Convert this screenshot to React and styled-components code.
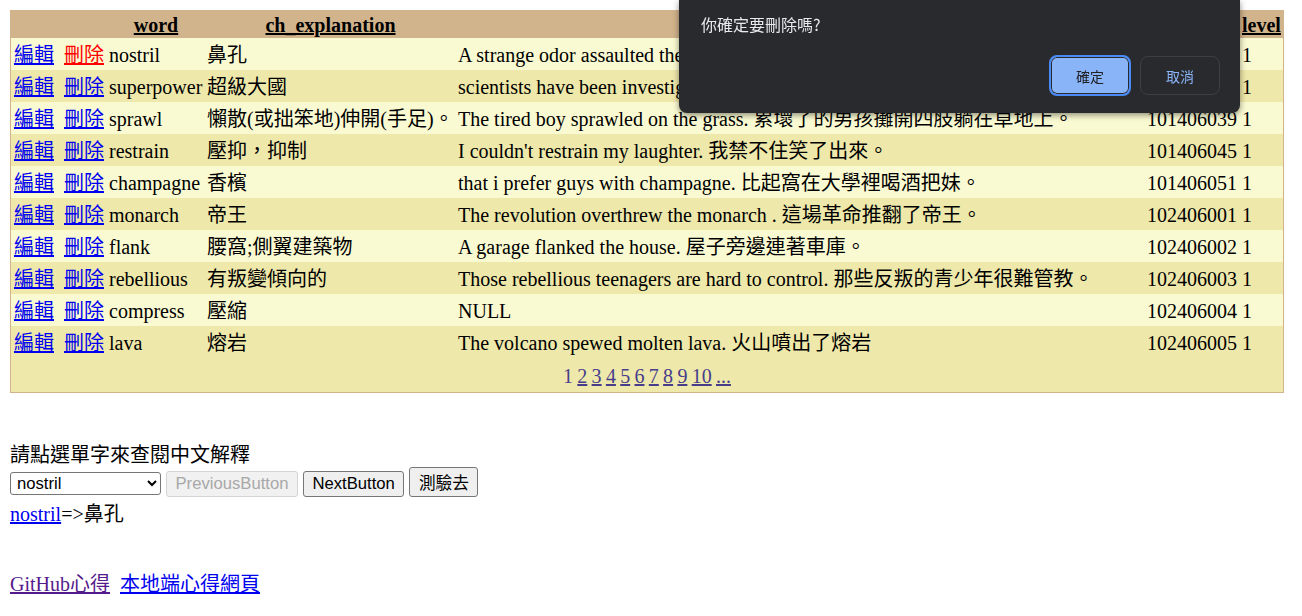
import styled, { createGlobalStyle } from "styled-components";

const GlobalStyle = createGlobalStyle`
	body {
		margin: 10px;
		background: #fff;
		color: #000;
		font-family: "Liberation Serif", "Noto Sans CJK TC", serif;
		font-size: 20px;
	}
`;

const words = [
	{ word: "nostril", ch: "鼻孔", sentence: "A strange odor assaulted the nostrils. 一股怪味撲鼻而來。", id: "101406026" },
	{ word: "superpower", ch: "超級大國", sentence: "scientists have been investigating the superpower. 科學家一直在研究超能力。", id: "101406033" },
	{ word: "sprawl", ch: "懶散(或拙笨地)伸開(手足)。", sentence: "The tired boy sprawled on the grass. 累壞了的男孩攤開四肢躺在草地上。", id: "101406039" },
	{ word: "restrain", ch: "壓抑，抑制", sentence: "I couldn't restrain my laughter. 我禁不住笑了出來。", id: "101406045" },
	{ word: "champagne", ch: "香檳", sentence: "that i prefer guys with champagne. 比起窩在大學裡喝酒把妹。", id: "101406051" },
	{ word: "monarch", ch: "帝王", sentence: "The revolution overthrew the monarch . 這場革命推翻了帝王。", id: "102406001" },
	{ word: "flank", ch: "腰窩;側翼建築物", sentence: "A garage flanked the house. 屋子旁邊連著車庫。", id: "102406002" },
	{ word: "rebellious", ch: "有叛變傾向的", sentence: "Those rebellious teenagers are hard to control. 那些反叛的青少年很難管教。", id: "102406003" },
	{ word: "compress", ch: "壓縮", sentence: "NULL", id: "102406004" },
	{ word: "lava", ch: "熔岩", sentence: "The volcano spewed molten lava. 火山噴出了熔岩", id: "102406005" },
];

const columns = [
	{ key: "actions", label: "", width: 96 },
	{ key: "word", label: "word", width: 98 },
	{ key: "ch", label: "ch_explanation", width: 251 },
	{ key: "sentence", label: "en_sentence", width: 689 },
	{ key: "id", label: "id", width: 95 },
	{ key: "level", label: "level", width: 43 },
];

const pages = ["1", "2", "3", "4", "5", "6", "7", "8", "9", "10", "..."];

const App = () => {
	return (
		<>
			<GlobalStyle />
			<Grid>
				<colgroup>
					{columns.map((c) => (
						<Col key={c.key} $w={c.width} />
					))}
				</colgroup>
				<thead>
					<HeadRow>
						{columns.map((c) => (
							<HeadCell key={c.key}>
								{c.label && <SortLink href="#">{c.label}</SortLink>}
							</HeadCell>
						))}
					</HeadRow>
				</thead>
				<tbody>
					{words.map((w, i) => (
						<Row key={w.word} $alt={i % 2 === 1}>
							<ActionCell>
								<CmdLink href="#">編輯</CmdLink>
								<CmdLink href="#" $pressed={i === 0}>刪除</CmdLink>
							</ActionCell>
							<Cell>{w.word}</Cell>
							<Cell>{w.ch}</Cell>
							<Cell>{w.sentence}</Cell>
							<Cell>{w.id}</Cell>
							<Cell>1</Cell>
						</Row>
					))}
					<PagerRow>
						<PagerCell colSpan={6}>
							<Pager>
								{pages.map((p) =>
									p === "1" ? (
										<span key={p}>{p}</span>
									) : (
										<PageLink key={p} href="#">{p}</PageLink>
									)
								)}
							</Pager>
						</PagerCell>
					</PagerRow>
				</tbody>
			</Grid>

			<Hint>請點選單字來查閱中文解釋</Hint>
			<Controls>
				<WordSelect defaultValue="nostril">
					{words.map((w) => (
						<option key={w.word} value={w.word}>{w.word}</option>
					))}
				</WordSelect>
				<PlainButton disabled>PreviousButton</PlainButton>
				<PlainButton>NextButton</PlainButton>
				<PlainButton>測驗去</PlainButton>
			</Controls>
			<Answer>
				<TextLink href="#">nostril</TextLink>=&gt;鼻孔
			</Answer>
			<Footer>
				<TextLink href="#" $visited>GitHub心得</TextLink>
				<TextLink href="#">本地端心得網頁</TextLink>
			</Footer>

			<ConfirmBox role="dialog">
				<ConfirmText>你確定要刪除嗎?</ConfirmText>
				<ConfirmActions>
					<OkButton>確定</OkButton>
					<CancelButton>取消</CancelButton>
				</ConfirmActions>
			</ConfirmBox>
		</>
	);
};

export default App;

// Styled components
const Grid = styled.table`
	width: 1274px;
	table-layout: fixed;
	border-collapse: separate;
	border-spacing: 0;
	border: 1px solid #d2b48c;
	background: #fafad2;
`;

const Col = styled.col`
	width: ${({ $w }) => $w}px;
`;

const HeadRow = styled.tr`
	background: #d2b48c;
`;

const HeadCell = styled.th`
	padding: 3px 2px 1px;
	line-height: 23px;
	font-weight: bold;
	text-align: center;
	white-space: nowrap;
	overflow: hidden;
`;

const SortLink = styled.a`
	color: #000;
	text-decoration: underline;
`;

const Row = styled.tr`
	background: ${({ $alt }) => ($alt ? "#eee8aa" : "#fafad2")};
`;

const Cell = styled.td`
	padding: 3px 2px 1px;
	line-height: 28px;
	white-space: nowrap;
	overflow: hidden;
	vertical-align: middle;
`;

const ActionCell = styled(Cell)`
	padding-left: 3px;

	a + a {
		margin-left: 10px;
	}
`;

const CmdLink = styled.a`
	color: ${({ $pressed }) => ($pressed ? "#ff0000" : "#0000ee")};
	text-decoration: underline;
`;

const PagerRow = styled.tr`
	background: #eee8aa;
`;

const PagerCell = styled.td`
	padding: 3px 2px 1px;
	line-height: 30px;
	color: #483d8b;
`;

const Pager = styled.div`
	display: flex;
	justify-content: center;
	gap: 4.3px;
`;

const PageLink = styled.a`
	color: #483d8b;
	text-decoration: underline;
`;

const Hint = styled.div`
	margin-top: 51px;
	line-height: 23px;
`;

const Controls = styled.div`
	display: flex;
	align-items: baseline;
	gap: 5px;
`;

const WordSelect = styled.select`
	width: 151px;
	height: 23px;
	font-family: "Liberation Sans", "Noto Sans CJK TC", sans-serif;
	font-size: 16.67px;
	color: #000;
	border: 1px solid #767676;
	border-radius: 3px;
	background: #fff;
	padding: 0 2px;
`;

const PlainButton = styled.button`
	font-family: "Liberation Sans", "Noto Sans CJK TC", sans-serif;
	font-size: 16.67px;
	padding: 2px 8.5px;
	color: #000;
	background: #efefef;
	border: 1px solid #767676;
	border-radius: 3px;

	&:disabled {
		color: #a8a8a8;
		background: #f1f1f1;
		border-color: #d4d4d4;
	}
`;

const Answer = styled.div`
	margin-top: 4px;
	line-height: 26px;
`;

const Footer = styled.div`
	margin-top: 44px;
	line-height: 26px;
	display: flex;
	gap: 10px;
`;

const TextLink = styled.a`
	color: ${({ $visited }) => ($visited ? "#551a8b" : "#0000ee")};
	text-decoration: underline;
`;

const ConfirmBox = styled.div`
	position: fixed;
	top: 0;
	left: 679px;
	width: 561px;
	height: 113px;
	box-sizing: border-box;
	padding: 14px 20px 0 22px;
	background: #292a2d;
	border-radius: 0 0 8px 8px;
	box-shadow: 0 2px 6px rgba(0, 0, 0, 0.45);
	font-family: "Noto Sans CJK TC", "Liberation Sans", sans-serif;
	display: flex;
	flex-direction: column;
`;

const ConfirmText = styled.div`
	color: #e8eaed;
	font-size: 16px;
	line-height: 20px;
`;

const ConfirmActions = styled.div`
	margin-top: 21px;
	display: flex;
	justify-content: flex-end;
	align-items: center;
	gap: 9px;
`;

const OkButton = styled.button`
	width: 82px;
	height: 41px;
	border: 2px solid #4a8af4;
	border-radius: 8px;
	background: #8ab4f8;
	box-shadow: inset 0 0 0 1px #292a2d;
	color: #202124;
	font-family: inherit;
	font-size: 14px;
`;

const CancelButton = styled.button`
	width: 80px;
	height: 39px;
	border: 1px solid #3c4043;
	border-radius: 8px;
	background: transparent;
	color: #8ab4f8;
	font-family: inherit;
	font-size: 14px;
`;
